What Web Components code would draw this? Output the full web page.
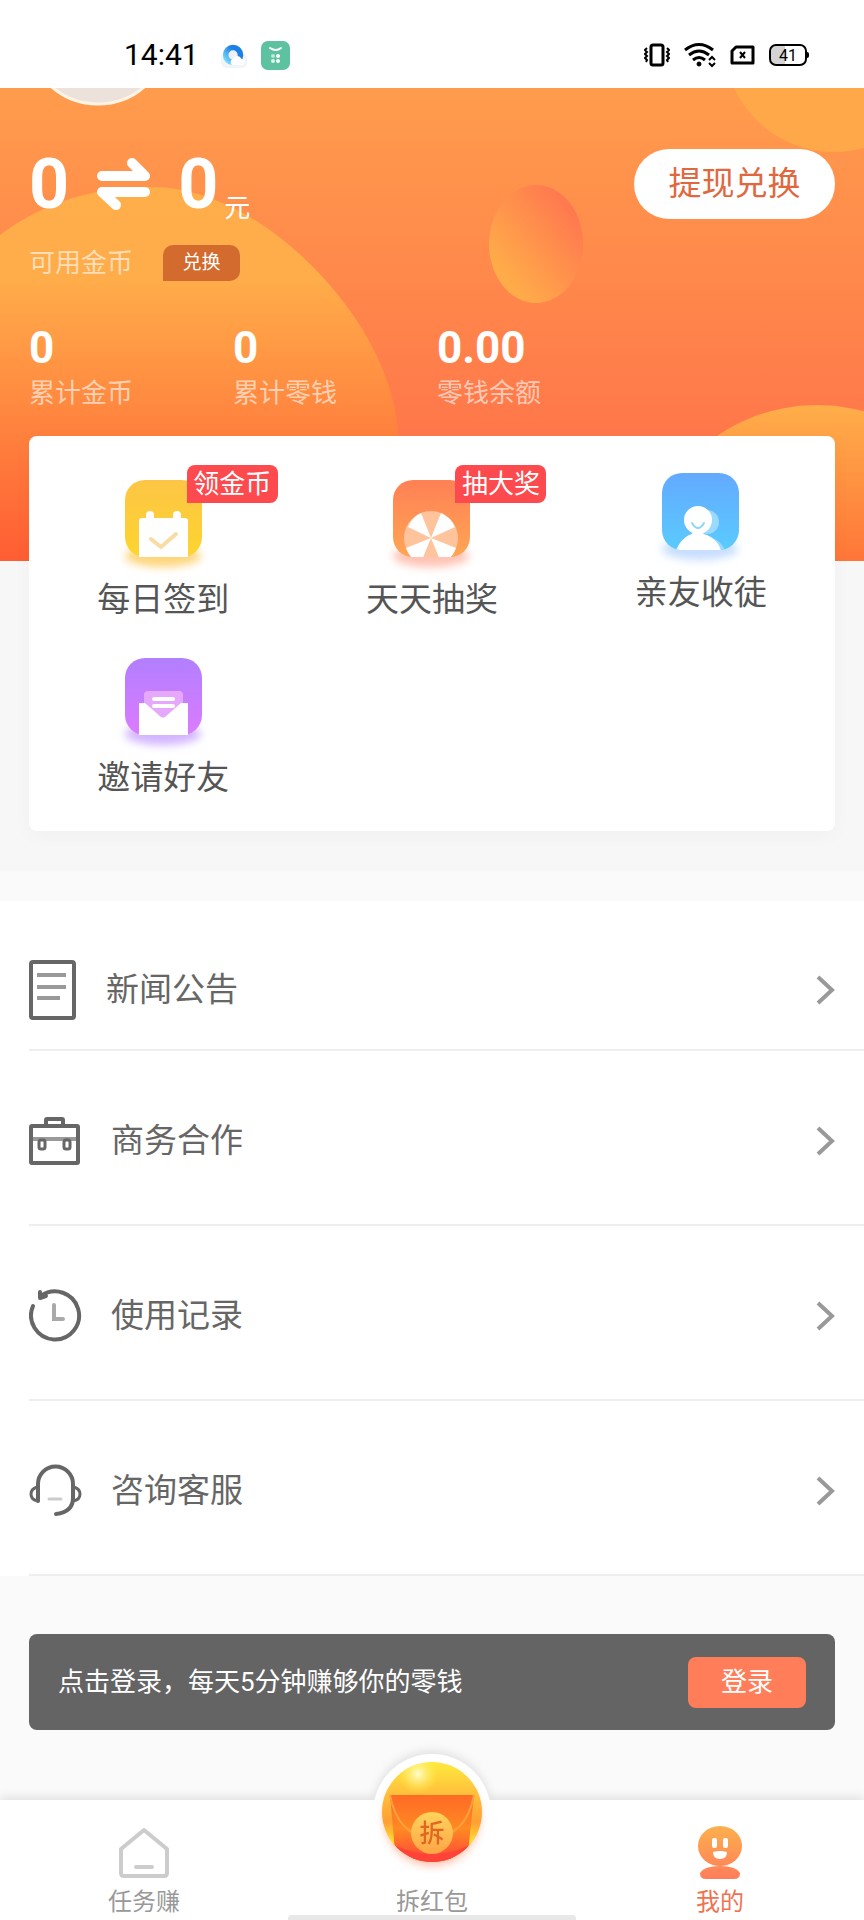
<!DOCTYPE html>
<html lang="zh-CN">
<head>
<meta charset="utf-8">
<meta name="viewport" content="width=device-width, initial-scale=1">
<title>我的</title>
<style>
  body {
    margin: 0;
    background: #fafafa;
    font-family: Roboto, "Noto Sans CJK SC", sans-serif;
    color: #666;
  }
  my-page {
    min-height: 100vh;
  }
</style>
</head>
<body>
<my-page>
  <my-status-bar time="14:41" battery="41"></my-status-bar>

  <my-wallet coins="0" cash="0">
    <my-stat label="累计金币">0</my-stat>
    <my-stat label="累计零钱">0</my-stat>
    <my-stat label="零钱余额">0.00</my-stat>
  </my-wallet>

  <my-feature-card>
    <my-feature icon="calendar" badge="领金币">每日签到</my-feature>
    <my-feature icon="wheel" badge="抽大奖">天天抽奖</my-feature>
    <my-feature icon="friend">亲友收徒</my-feature>
    <my-feature icon="mail">邀请好友</my-feature>
  </my-feature-card>

  <my-menu>
    <my-menu-row icon="news" size="short">新闻公告</my-menu-row>
    <my-menu-row icon="case">商务合作</my-menu-row>
    <my-menu-row icon="history">使用记录</my-menu-row>
    <my-menu-row icon="service">咨询客服</my-menu-row>
  </my-menu>

  <my-login-banner action="登录">点击登录，每天5分钟赚够你的零钱</my-login-banner>

  <my-tab-bar>
    <my-tab icon="home">任务赚</my-tab>
    <my-tab icon="packet" raised>拆红包</my-tab>
    <my-tab icon="me" active>我的</my-tab>
  </my-tab-bar>
</my-page>

<script>
const reset = `
  :host, * {
    box-sizing: border-box;
  }
  * {
    margin: 0;
    padding: 0;
  }
  svg {
    display: block;
  }
  button {
    border: 0;
    font: inherit;
    color: inherit;
    cursor: pointer;
  }
  a {
    color: inherit;
    text-decoration: none;
  }
`;

// rounded tile behind each feature icon, with its coloured glow
const tile = (top, bottom, glow, inner) => `
  <svg width="97" height="97" viewBox="-10 0 97 97" aria-hidden="true">
    <defs>
      <linearGradient id="g" x1="0" y1="0" x2="0" y2="1">
        <stop offset="0" stop-color="${top}"/><stop offset="1" stop-color="${bottom}"/>
      </linearGradient>
      <filter id="b" x="-20%" y="-60%" width="140%" height="220%"><feGaussianBlur stdDeviation="4"/></filter>
      <clipPath id="c"><rect width="77" height="77" rx="20"/></clipPath>
    </defs>
    <ellipse cx="38" cy="76" rx="38" ry="11" fill="${glow}" opacity=".8" filter="url(#b)"/>
    <rect width="77" height="77" rx="20" fill="url(#g)"/>
    ${inner}
  </svg>`;

const icons = {
  calendar: tile("#fdc545", "#fdd52f", "#fdcb5c", `
    <path d="M14 41a3 3 0 0 1 3-3h4v-3a4 4 0 0 1 8 0v3h19v-3a4 4 0 0 1 8 0v3h4a3 3 0 0 1 3 3v36H14z" fill="#fff"/>
    <path d="M26 59l10 8 15-13" fill="none" stroke="#f8dca4" stroke-width="4" stroke-linecap="round"/>`),
  wheel: tile("#ff8055", "#ffa655", "#ffb3a0", `
    <g clip-path="url(#c)">
      <circle cx="38" cy="58" r="27" fill="#ffc49c"/>
      <path d="M38 58L28 33A27 27 0 0 0 15 47zM38 58l10-25a27 27 0 0 1 14 14zM38 58L13 68a27 27 0 0 0 8 12h8zM38 58l25 10a27 27 0 0 1-8 12h-8z" fill="#fff"/>
    </g>`),
  friend: tile("#63a9ff", "#5acbfe", "#b9d6ff", `
    <g clip-path="url(#c)">
      <circle cx="45" cy="49" r="12" fill="#9adafe"/>
      <path d="M45 63q13 3 18 14H45z" fill="#9adafe"/>
      <circle cx="36" cy="47" r="14" fill="#fff"/>
      <path d="M31 58h9q0 3 5 4 10 4 14 15H14q5-11 13-15 4-1 4-4z" fill="#fff"/>
      <path d="M30 50q6 10 12 0" fill="none" stroke="#8ed6f5" stroke-width="2" stroke-linecap="round"/>
    </g>`),
  mail: tile("#b17fff", "#dc7bff", "#c7a3ff", `
    <path d="M19 70V37a4 4 0 0 1 4-4h31a4 4 0 0 1 4 4v33z" fill="#e6a8fd"/>
    <path d="M29 41h19M29 48h19" stroke="#fff" stroke-width="4" stroke-linecap="round"/>
    <path d="M14 45h6l16 14q2 1 4 0l16-14h7v32H14z" fill="#fff"/>`),
  news: `
    <svg width="48" height="60" viewBox="0 0 48 60" fill="none" aria-hidden="true">
      <rect x="2" y="2" width="43" height="56" rx="2" stroke="#666" stroke-width="4"/>
      <path d="M8 15h29M8 27h29M8 38h23" stroke="#999" stroke-width="4"/>
    </svg>`,
  case: `
    <svg width="53" height="53" viewBox="0 0 53 53" fill="none" aria-hidden="true">
      <path d="M2 25h47" stroke="#999" stroke-width="4"/>
      <g stroke="#666" stroke-width="4">
        <rect x="2" y="12" width="47" height="37" rx="1"/>
        <path d="M17 11V6q0-1 1-1h15q1 0 1 1v5"/>
        <rect x="10" y="26" width="6" height="9" rx="2" stroke-width="3"/><rect x="35" y="26" width="6" height="9" rx="2" stroke-width="3"/>
      </g>
    </svg>`,
  history: `
    <svg width="53" height="53" viewBox="0 0 53 53" fill="none" stroke-linecap="round" aria-hidden="true">
      <path d="M4 17A24 24 0 1 0 12 7" stroke="#666" stroke-width="4"/>
      <path d="M11 3v6l6-2" stroke="#666" stroke-width="4" stroke-linejoin="round"/>
      <path d="M25 16v14h9" stroke="#aaa" stroke-width="4"/>
    </svg>`,
  service: `
    <svg width="53" height="53" viewBox="0 0 53 53" fill="none" stroke-linecap="round" aria-hidden="true">
      <path d="M9 37V20a17 17 0 0 1 35 0v14q0 14-17 16" stroke="#666" stroke-width="4"/>
      <path d="M8 23q-6 2-6 7 0 6 7 7M45 23q6 2 6 7 0 6-7 7" stroke="#666" stroke-width="3"/>
      <path d="M20 35h12" stroke="#ccc" stroke-width="3"/>
    </svg>`,
  home: `
    <svg width="52" height="52" viewBox="0 0 52 52" fill="none" stroke="#ccc" stroke-width="4" stroke-linecap="round" stroke-linejoin="round" aria-hidden="true">
      <path d="M26 3l23 19v24q0 3-3 3H6q-3 0-3-3V22z"/>
      <path d="M18 40h16"/>
    </svg>`,
  me: `
    <svg width="44" height="54" viewBox="0 0 44 54" aria-hidden="true">
      <defs><linearGradient id="g" gradientUnits="userSpaceOnUse" x1="0" y1="0" x2="0" y2="54">
        <stop offset="0" stop-color="#fdb14c"/><stop offset="1" stop-color="#fd7d5b"/>
      </linearGradient></defs>
      <ellipse cx="22" cy="21" rx="22" ry="20" fill="url(#g)"/>
      <path d="M2 48q4-7 20-7t20 7q0 6-6 6H8q-6 0-6-6z" fill="url(#g)"/>
      <g fill="#fff">
        <rect x="14" y="13" width="5" height="10" rx="2"/><rect x="25" y="13" width="5" height="10" rx="2"/>
        <path d="M15 27q7-2 14 0 0 7-7 7t-7-7z"/>
      </g>
    </svg>`,
  packet: `
    <svg width="124" height="130" viewBox="0 0 124 130" aria-hidden="true">
      <defs>
        <linearGradient id="gold" x1="0" y1="0" x2="0" y2="1">
          <stop offset="0" stop-color="#ffea3c"/><stop offset=".3" stop-color="#ffc23c"/><stop offset=".6" stop-color="#ff9f35"/><stop offset=".8" stop-color="#ffe02e"/>
        </linearGradient>
        <linearGradient id="red" x1="0" y1="0" x2="0" y2="1">
          <stop offset="0" stop-color="#ff6a26"/><stop offset=".5" stop-color="#ff8a22"/><stop offset="1" stop-color="#ff3f3a"/>
        </linearGradient>
        <linearGradient id="coin" x1="0" y1="0" x2="0" y2="1">
          <stop offset="0" stop-color="#ffd45c"/><stop offset="1" stop-color="#ffa545"/>
        </linearGradient>
        <radialGradient id="shine"><stop offset="0" stop-color="#fffbd0"/><stop offset="1" stop-color="#fff04a" stop-opacity="0"/></radialGradient>
        <filter id="b" x="-20%" y="-20%" width="140%" height="140%"><feGaussianBlur stdDeviation="4"/></filter>
        <clipPath id="c"><circle cx="62" cy="60" r="50"/></clipPath>
      </defs>
      <circle cx="62" cy="61" r="59" fill="#fff"/>
      <circle cx="62" cy="66" r="48" fill="#ff9a76" opacity=".6" filter="url(#b)"/>
      <g clip-path="url(#c)">
        <rect x="12" y="10" width="100" height="100" fill="url(#gold)"/>
        <circle cx="48" cy="22" r="20" fill="url(#shine)"/>
        <path d="M20 43h84l-7 68H26z" fill="url(#red)"/>
        <path d="M26 94l2 20h68l2-20q-36 16-72 0z" fill="#ff4338"/>
        <path d="M20 43q8 42 42 42t42-42" fill="none" stroke="#ffa03c" stroke-width="2"/>
      </g>
      <circle cx="62" cy="81" r="21" fill="url(#coin)"/>
      <text x="62" y="90" text-anchor="middle" font-size="25" font-weight="500" fill="#e06622">拆</text>
    </svg>`
};

class MyElement extends HTMLElement {
  constructor() {
    super();
    this.attachShadow({mode: "open"});
  }
  attr(name) {
    return this.getAttribute(name) || "";
  }
  connectedCallback() {
    const template = document.createElement("template");
    template.innerHTML = `<style>${reset}${this.css()}</style>${this.html()}`;
    this.shadowRoot.replaceChildren(template.content.cloneNode(true));
  }
}

class MyPage extends MyElement {
  css() {
    return `
      :host {
        display: flex;
        flex-direction: column;
      }`;
  }
  html() {
    return `<slot></slot>`;
  }
}

class MyStatusBar extends MyElement {
  css() {
    return `
      :host {
        display: flex;
        justify-content: space-between;
        align-items: center;
        height: 88px;
        padding: 22px 55px 0 124px;
        background: #fff;
        color: #000;
      }
      .side {
        display: flex;
        align-items: center;
        gap: 14px;
      }
      .time {
        font-size: 30px;
        line-height: 36px;
        margin-right: 8px;
      }
      .battery {
        position: relative;
        width: 38px;
        height: 22px;
        border: 2px solid #000;
        border-radius: 7px;
        background: linear-gradient(90deg, #d4d4d4 40%, #fff 40%);
        font-size: 16px;
        line-height: 19px;
        text-align: center;
        margin-right: 2px;
      }
      .battery::after {
        content: "";
        position: absolute;
        right: -4px;
        top: 6px;
        width: 3px;
        height: 6px;
        background: #000;
        border-radius: 0 2px 2px 0;
      }`;
  }
  html() {
    return `
      <div class="side">
        <span class="time">${this.attr("time")}</span>
        <svg width="26" height="28" viewBox="0 0 28 28" aria-hidden="true">
          <defs><linearGradient id="q" x1="1" y1="0" x2="0" y2="1">
            <stop offset=".3" stop-color="#1b7fe8"/><stop offset="1" stop-color="#7fe0fa"/>
          </linearGradient></defs>
          <rect y="12" width="28" height="16" rx="6" fill="#f1f4f8"/>
          <circle cx="13" cy="14" r="8" fill="#eef2f8" stroke="url(#q)" stroke-width="6"/>
          <path d="M12 25a4 4 0 0 1 1-7 5 5 0 0 1 9 0 4 4 0 0 1 2 7z" fill="#fff"/>
        </svg>
        <svg width="29" height="29" viewBox="0 0 29 29" aria-hidden="true">
          <rect width="29" height="29" rx="7" fill="#5cc2a0"/>
          <path d="M9 7q6 4 11 0" fill="none" stroke="#fff" stroke-width="2" stroke-linecap="round"/>
          <g fill="#fff"><circle cx="12" cy="15" r="2" opacity=".6"/><circle cx="17" cy="15" r="2"/><circle cx="12" cy="20" r="2" opacity=".8"/><circle cx="17" cy="20" r="2"/></g>
        </svg>
      </div>
      <div class="side">
        <svg width="26" height="24" viewBox="0 0 26 24" fill="none" stroke="#000" stroke-width="2" aria-hidden="true">
          <rect x="7" y="2" width="12" height="20" rx="2" stroke-width="3"/>
          <path d="M3 5l-2 2 2 2-2 2 2 2-2 2 2 2-1 2M23 5l2 2-2 2 2 2-2 2 2 2-2 2 1 2"/>
        </svg>
        <svg width="32" height="26" viewBox="0 0 32 26" fill="none" stroke="#000" aria-hidden="true">
          <path d="M1 8q14-11 28 0M5 13q10-8 20 0" stroke-width="3"/>
          <path d="M9 18q6-5 12 0" stroke-width="3"/>
          <circle cx="15" cy="22" r="2" fill="#000"/>
          <path d="M25 18l3-3 3 3M25 21l3 3 3-3" stroke-width="2"/>
        </svg>
        <svg width="25" height="20" viewBox="0 0 25 20" fill="none" stroke="#000" aria-hidden="true">
          <path d="M2 6l4-4h17v16H2z" stroke-width="3" stroke-linejoin="round"/>
          <path d="M10 7l5 6M15 7l-5 6" stroke-width="2"/>
        </svg>
        <span class="battery">${this.attr("battery")}</span>
      </div>`;
  }
}

class MyWallet extends MyElement {
  css() {
    return `
      :host {
        display: block;
        position: relative;
        min-height: 473px;
        padding: 54px 29px 0;
        color: #fff;
        overflow: hidden;
      }
      .scene {
        position: absolute;
        inset: 0;
        width: 100%;
        height: 100%;
      }
      .balance, .exchange, .stats {
        position: relative;
        display: flex;
      }
      .balance {
        align-items: center;
        height: 84px;
        font-size: 70px;
        font-weight: 700;
        line-height: 84px;
      }
      .swap {
        margin: 0 27px 0 28px;
      }
      .unit {
        align-self: flex-end;
        margin-left: 6px;
        font-size: 26px;
        font-weight: 400;
        line-height: 36px;
      }
      .withdraw {
        width: 201px;
        height: 70px;
        margin-left: auto;
        border-radius: 35px;
        background: #fff;
        color: #e0683f;
        font-size: 33px;
        font-weight: 400;
        line-height: 70px;
      }
      .exchange {
        align-items: center;
        height: 36px;
        margin-top: 19px;
        gap: 30px;
      }
      .label {
        font-size: 26px;
        line-height: 36px;
        color: rgba(255, 255, 255, .6);
      }
      .exchange button {
        width: 77px;
        height: 36px;
        border-radius: 10px 10px 10px 0;
        background: #d26b2d;
        font-size: 19px;
        line-height: 36px;
      }
      .stats {
        margin-top: 40px;
      }`;
  }
  html() {
    return `
      <svg class="scene" viewBox="0 88 864 473" preserveAspectRatio="none" aria-hidden="true">
        <defs>
          <linearGradient id="sky" x1="0" y1="0" x2="0" y2="1">
            <stop offset="0" stop-color="#ff9c4c"/><stop offset="1" stop-color="#ff6a4a"/>
          </linearGradient>
          <linearGradient id="hill" x1="0" y1="0" x2="0" y2="1">
            <stop offset="0" stop-color="#ffae4a"/><stop offset=".25" stop-color="#ffac4a"/><stop offset="1" stop-color="#ff5d33"/>
          </linearGradient>
          <linearGradient id="ball" x1="1" y1="0" x2="0" y2="1">
            <stop offset=".1" stop-color="#ff7450"/><stop offset=".8" stop-color="#ffab49"/>
          </linearGradient>
          <linearGradient id="corner" x1="0" y1="0" x2="0" y2="1">
            <stop offset="0" stop-color="#ffae4a"/><stop offset="1" stop-color="#ff6e36"/>
          </linearGradient>
        </defs>
        <rect y="88" width="864" height="473" fill="url(#sky)"/>
        <path d="M0 235C40 205 90 187 150 187c72 0 143 50 192 113 38 49 57 100 57 150v111H0z" fill="url(#hill)"/>
        <ellipse cx="536" cy="244" rx="47" ry="59" fill="url(#ball)"/>
        <circle cx="834" cy="42" r="110" fill="#ffa84a"/>
        <path d="M640 582a177 177 0 0 1 354 0z" fill="url(#corner)"/>
        <circle cx="98" cy="33" r="71" fill="#ece2db" stroke="#fff4e4" stroke-width="3"/>
      </svg>
      <div class="balance">
        <span>${this.attr("coins")}</span>
        <svg class="swap" width="54" height="54" viewBox="0 0 54 54" fill="none" stroke="#fff" stroke-width="10" stroke-linecap="round" stroke-linejoin="round" aria-hidden="true">
          <path d="M5 19h43L35 6M48 35H5l14 13"/>
        </svg>
        <span>${this.attr("cash")}</span>
        <span class="unit">元</span>
        <button class="withdraw">提现兑换</button>
      </div>
      <div class="exchange">
        <span class="label">可用金币</span>
        <button>兑换</button>
      </div>
      <div class="stats"><slot></slot></div>`;
  }
}

class MyStat extends MyElement {
  css() {
    return `
      :host {
        display: block;
        width: 204px;
      }
      strong {
        display: block;
        font-size: 44px;
        line-height: 54px;
      }
      span {
        display: block;
        font-size: 26px;
        line-height: 36px;
        color: rgba(255, 255, 255, .6);
      }`;
  }
  html() {
    return `<strong><slot></slot></strong><span>${this.attr("label")}</span>`;
  }
}

class MyFeatureCard extends MyElement {
  css() {
    return `
      :host {
        display: block;
        padding: 0 29px 40px;
        background: #f7f7f7;
      }
      .card {
        position: relative;
        display: grid;
        grid-template-columns: repeat(3, 1fr);
        row-gap: 35px;
        margin-top: -125px;
        padding: 37px 0 30px;
        border-radius: 8px;
        background: #fff;
        box-shadow: 0 4px 20px rgba(0, 0, 0, .03);
      }`;
  }
  html() {
    return `<div class="card"><slot></slot></div>`;
  }
}

class MyFeature extends MyElement {
  css() {
    return `
      :host {
        display: block;
      }
      :host([badge]) {
        padding-top: 7px;
      }
      a {
        display: flex;
        flex-direction: column;
        align-items: center;
        font-size: 33px;
        line-height: 46px;
        color: #555;
      }
      .icon {
        position: relative;
      }
      .badge {
        position: absolute;
        left: 72px;
        top: -15px;
        width: 91px;
        border-radius: 8px 8px 8px 0;
        background: #fc4a4e;
        color: #fff;
        font-size: 26px;
        line-height: 38px;
        text-align: center;
      }`;
  }
  html() {
    const badge = this.attr("badge");
    return `
      <a href="#">
        <span class="icon">
          ${icons[this.attr("icon")]}
          ${badge ? `<span class="badge">${badge}</span>` : ""}
        </span>
        <span><slot></slot></span>
      </a>`;
  }
}

class MyMenu extends MyElement {
  css() {
    return `
      :host {
        display: block;
        margin-top: 30px;
        padding: 24px 0 0 29px;
        background: #fff;
      }`;
  }
  html() {
    return `<nav><slot></slot></nav>`;
  }
}

class MyMenuRow extends MyElement {
  css() {
    return `
      :host {
        display: block;
        height: 175px;
        border-bottom: 2px solid #eee;
      }
      :host([size="short"]) {
        height: 126px;
      }
      a {
        display: flex;
        align-items: center;
        gap: 29px;
        height: 100%;
        padding: 6px 29px 0 0;
        font-size: 33px;
        line-height: 46px;
      }
      .arrow {
        margin-left: auto;
      }`;
  }
  html() {
    return `
      <a href="#">
        ${icons[this.attr("icon")]}
        <span><slot></slot></span>
        <svg class="arrow" width="19" height="30" viewBox="0 0 19 30" fill="none" stroke="#999" stroke-width="4" aria-hidden="true">
          <path d="M2 2l14 13L2 28"/>
        </svg>
      </a>`;
  }
}

class MyLoginBanner extends MyElement {
  css() {
    return `
      :host {
        display: flex;
        align-items: center;
        justify-content: space-between;
        min-height: 96px;
        margin: 58px 29px 70px;
        padding: 0 29px;
        border-radius: 8px;
        background: #646464;
        color: #fff;
        font-size: 26px;
        line-height: 36px;
      }
      button {
        width: 118px;
        height: 51px;
        border-radius: 8px;
        background: #ff7e59;
      }`;
  }
  html() {
    return `<p><slot></slot></p><button>${this.attr("action")}</button>`;
  }
}

class MyTabBar extends MyElement {
  css() {
    return `
      :host {
        display: block;
        position: sticky;
        bottom: 0;
        margin-top: auto;
        filter: drop-shadow(0 -3px 5px rgba(0, 0, 0, .1));
      }
      nav {
        display: grid;
        grid-template-columns: repeat(3, 1fr);
        height: 122px;
        background: #fff;
      }
      .indicator {
        position: absolute;
        left: 50%;
        bottom: 0;
        width: 288px;
        height: 7px;
        margin-left: -144px;
        border-radius: 4px;
        background: #e8e8e8;
      }`;
  }
  html() {
    return `<nav><slot></slot></nav><div class="indicator"></div>`;
  }
}

class MyTab extends MyElement {
  css() {
    return `
      :host {
        display: block;
        color: #999;
      }
      :host([active]) {
        color: #ef7350;
      }
      a {
        position: relative;
        display: flex;
        flex-direction: column;
        align-items: center;
        justify-content: flex-end;
        gap: 6px;
        height: 100%;
        padding-bottom: 3px;
        font-size: 24px;
        line-height: 34px;
      }
      :host([raised]) svg {
        position: absolute;
        left: 50%;
        top: -48px;
        margin-left: -62px;
      }`;
  }
  html() {
    return `<a href="#">${icons[this.attr("icon")]}<span><slot></slot></span></a>`;
  }
}

customElements.define("my-page", MyPage);
customElements.define("my-status-bar", MyStatusBar);
customElements.define("my-wallet", MyWallet);
customElements.define("my-stat", MyStat);
customElements.define("my-feature-card", MyFeatureCard);
customElements.define("my-feature", MyFeature);
customElements.define("my-menu", MyMenu);
customElements.define("my-menu-row", MyMenuRow);
customElements.define("my-login-banner", MyLoginBanner);
customElements.define("my-tab-bar", MyTabBar);
customElements.define("my-tab", MyTab);
</script>
</body>
</html>
